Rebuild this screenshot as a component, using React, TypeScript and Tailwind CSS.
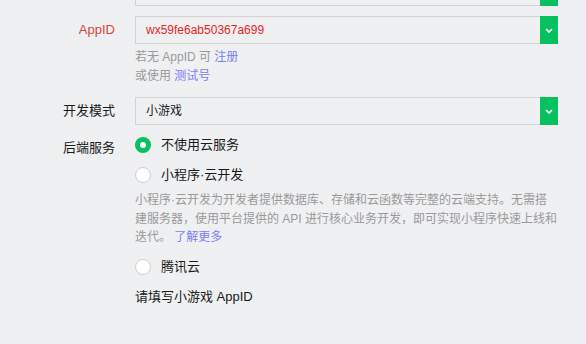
import React from 'react';

const font = 'font-["Liberation_Sans","Noto_Sans_CJK_SC",sans-serif]';

function Chevron() {
  return (
    <svg width="8" height="5" viewBox="0 0 8 5" fill="none">
      <path d="M1 1l3 3 3-3" stroke="white" strokeWidth="1.6" />
    </svg>
  );
}

function Select({ value, red }: { value: string; red?: boolean }) {
  return (
    <div className="flex h-[28px] w-[423px]">
      <div
        className={`flex-1 flex items-center pl-[10px] text-[12px] border-y border-l border-[#d3d3d3] ${
          red ? 'text-[#e5261f]' : 'text-[#1a1a1a]'
        }`}
      >
        {value}
      </div>
      <div className="w-[18px] h-full bg-[#07c160] flex items-center justify-center">
        <Chevron />
      </div>
    </div>
  );
}

function Radio({ checked, label }: { checked?: boolean; label: string }) {
  return (
    <div className="flex items-center h-[20px]">
      {checked ? (
        <div className="w-[16px] h-[16px] rounded-full bg-[#07c160] flex items-center justify-center">
          <div className="w-[6px] h-[6px] rounded-full bg-white" />
        </div>
      ) : (
        <div className="w-[16px] h-[16px] rounded-full bg-white border border-[#cfcfcf]" />
      )}
      <span className="ml-[10px] text-[13px] text-[#1a1a1a]">{label}</span>
    </div>
  );
}

export default function App() {
  return (
    <div className={`w-[586px] h-[344px] overflow-hidden bg-[#eff0f2] ${font}`}>
      <div className="flex -mt-[22px]">
        <div className="w-[135px]" />
        <Select value="" />
      </div>

      <div className="flex mt-[10px] items-center">
        <div className="w-[115px] text-right text-[13px] text-[#d9453f] mr-[20px]">AppID</div>
        <Select value="wx59fe6ab50367a699" red />
      </div>

      <div className="ml-[135px] mt-[4px] text-[12px] leading-[19px] text-[#9a9a9a]">
        <div>
          若无 AppID 可 <span className="text-[#7b7ef2]">注册</span>
        </div>
        <div>
          或使用 <span className="text-[#7b7ef2]">测试号</span>
        </div>
      </div>

      <div className="flex mt-[11px] items-center">
        <div className="w-[115px] text-right text-[13px] text-[#1a1a1a] mr-[20px]">开发模式</div>
        <Select value="小游戏" />
      </div>

      <div className="flex mt-[10px]">
        <div className="w-[115px] text-right text-[13px] text-[#1a1a1a] mr-[20px] pt-[3px]">后端服务</div>
        <div className="w-[423px]">
          <Radio checked label="不使用云服务" />
          <div className="mt-[10px]">
            <Radio label="小程序·云开发" />
          </div>
          <p className="mt-[6px] text-[12px] leading-[18.5px] text-[#9a9a9a]">
            小程序·云开发为开发者提供数据库、存储和云函数等完整的云端支持。无需搭建服务器，使用平台提供的 API 进行核心业务开发，即可实现小程序快速上线和迭代。 <span className="text-[#7b7ef2]">了解更多</span>
          </p>
          <div className="mt-[10px]">
            <Radio label="腾讯云" />
          </div>
          <div className="mt-[10px] text-[13px] leading-[20px] text-[#1a1a1a]">请填写小游戏 AppID</div>
        </div>
      </div>
    </div>
  );
}
